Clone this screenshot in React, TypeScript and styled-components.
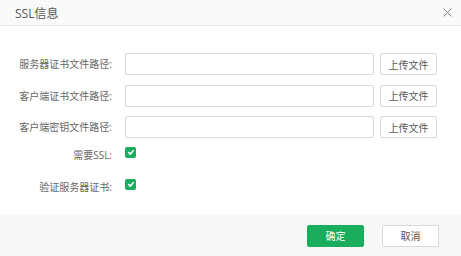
import styled, { createGlobalStyle } from 'styled-components';

const GlobalStyle = createGlobalStyle`
  html, body {
    margin: 0;
    padding: 0;
    background: #fff;
    font-family: "Open Sans", "Noto Sans CJK SC", sans-serif;
  }
`;

const Dialog = styled.div`
  width: 461px;
  height: 256px;
  display: flex;
  flex-direction: column;
  background: #fff;
  overflow: hidden;
`;

const Header = styled.div`
  height: 26px;
  flex: none;
  display: flex;
  align-items: center;
  justify-content: space-between;
  padding: 0 9px 0 15px;
  background: #fafafa;
  border-bottom: 1px solid #e6e6e6;
  box-sizing: border-box;
`;

const Title = styled.span`
  font-size: 12px;
  color: #555;
`;

const Close = styled.span`
  display: flex;
  align-items: center;
  justify-content: center;
  width: 10px;
  height: 10px;
  color: #888;
`;

const Body = styled.div`
  flex: 1;
  display: flex;
  flex-direction: column;
  padding-top: 27px;
`;

const Row = styled.div`
  display: flex;
  align-items: center;
  height: 22px;
  margin-bottom: 9.5px;
`;

const CheckRow = styled.div`
  display: flex;
  align-items: flex-end;
  height: 14px;
  margin-top: ${(p: { $top: number }) => p.$top}px;
`;

const Label = styled.span`
  width: 112px;
  flex: none;
  text-align: right;
  font-size: 10px;
  color: #666;
  margin-right: 13px;
  line-height: 12px;
`;

const Input = styled.input`
  width: 249px;
  height: 22px;
  box-sizing: border-box;
  border: 1px solid #d9d9d9;
  border-radius: 2px;
  outline: none;
  padding: 0 6px;
  margin: 0;
`;

const Button = styled.button<{ $primary?: boolean }>`
  width: 57px;
  height: 22px;
  box-sizing: border-box;
  border-radius: 2px;
  font-family: inherit;
  font-size: 10px;
  padding: 0;
  cursor: pointer;
  border: 1px solid ${(p) => (p.$primary ? '#1aad5d' : '#d9d9d9')};
  background: ${(p) => (p.$primary ? '#1aad5d' : '#fff')};
  color: ${(p) => (p.$primary ? '#fff' : '#555')};
`;

const UploadButton = styled(Button)`
  margin-left: 6px;
`;

const Check = styled.span`
  width: 11px;
  height: 11px;
  border-radius: 2px;
  background: #1aad5d;
  display: flex;
  align-items: center;
  justify-content: center;
  margin-bottom: 3px;
`;

const Footer = styled.div`
  height: 41px;
  flex: none;
  display: flex;
  align-items: center;
  justify-content: flex-end;
  gap: 18px;
  padding-right: 22px;
  background: #f7f7f7;
`;

const fileRows = ['服务器证书文件路径:', '客户端证书文件路径:', '客户端密钥文件路径:'];

function CheckBox() {
  return (
    <Check>
      <svg width="8" height="8" viewBox="0 0 8 8">
        <path d="M1.3 4.2 L3.2 6 L6.7 2.2" fill="none" stroke="#fff" strokeWidth="1.6" />
      </svg>
    </Check>
  );
}

export default function App() {
  return (
    <Dialog>
      <GlobalStyle />
      <Header>
        <Title>SSL信息</Title>
        <Close>
          <svg width="9" height="9" viewBox="0 0 9 9">
            <path d="M0.5 0.5 L8.5 8.5 M8.5 0.5 L0.5 8.5" stroke="#8a8a8a" strokeWidth="1" />
          </svg>
        </Close>
      </Header>
      <Body>
        {fileRows.map((label) => (
          <Row key={label}>
            <Label>{label}</Label>
            <Input />
            <UploadButton>上传文件</UploadButton>
          </Row>
        ))}
        <CheckRow $top={-1}>
          <Label>需要SSL:</Label>
          <CheckBox />
        </CheckRow>
        <CheckRow $top={18}>
          <Label>验证服务器证书:</Label>
          <CheckBox />
        </CheckRow>
      </Body>
      <Footer>
        <Button $primary>确定</Button>
        <Button>取消</Button>
      </Footer>
    </Dialog>
  );
}
